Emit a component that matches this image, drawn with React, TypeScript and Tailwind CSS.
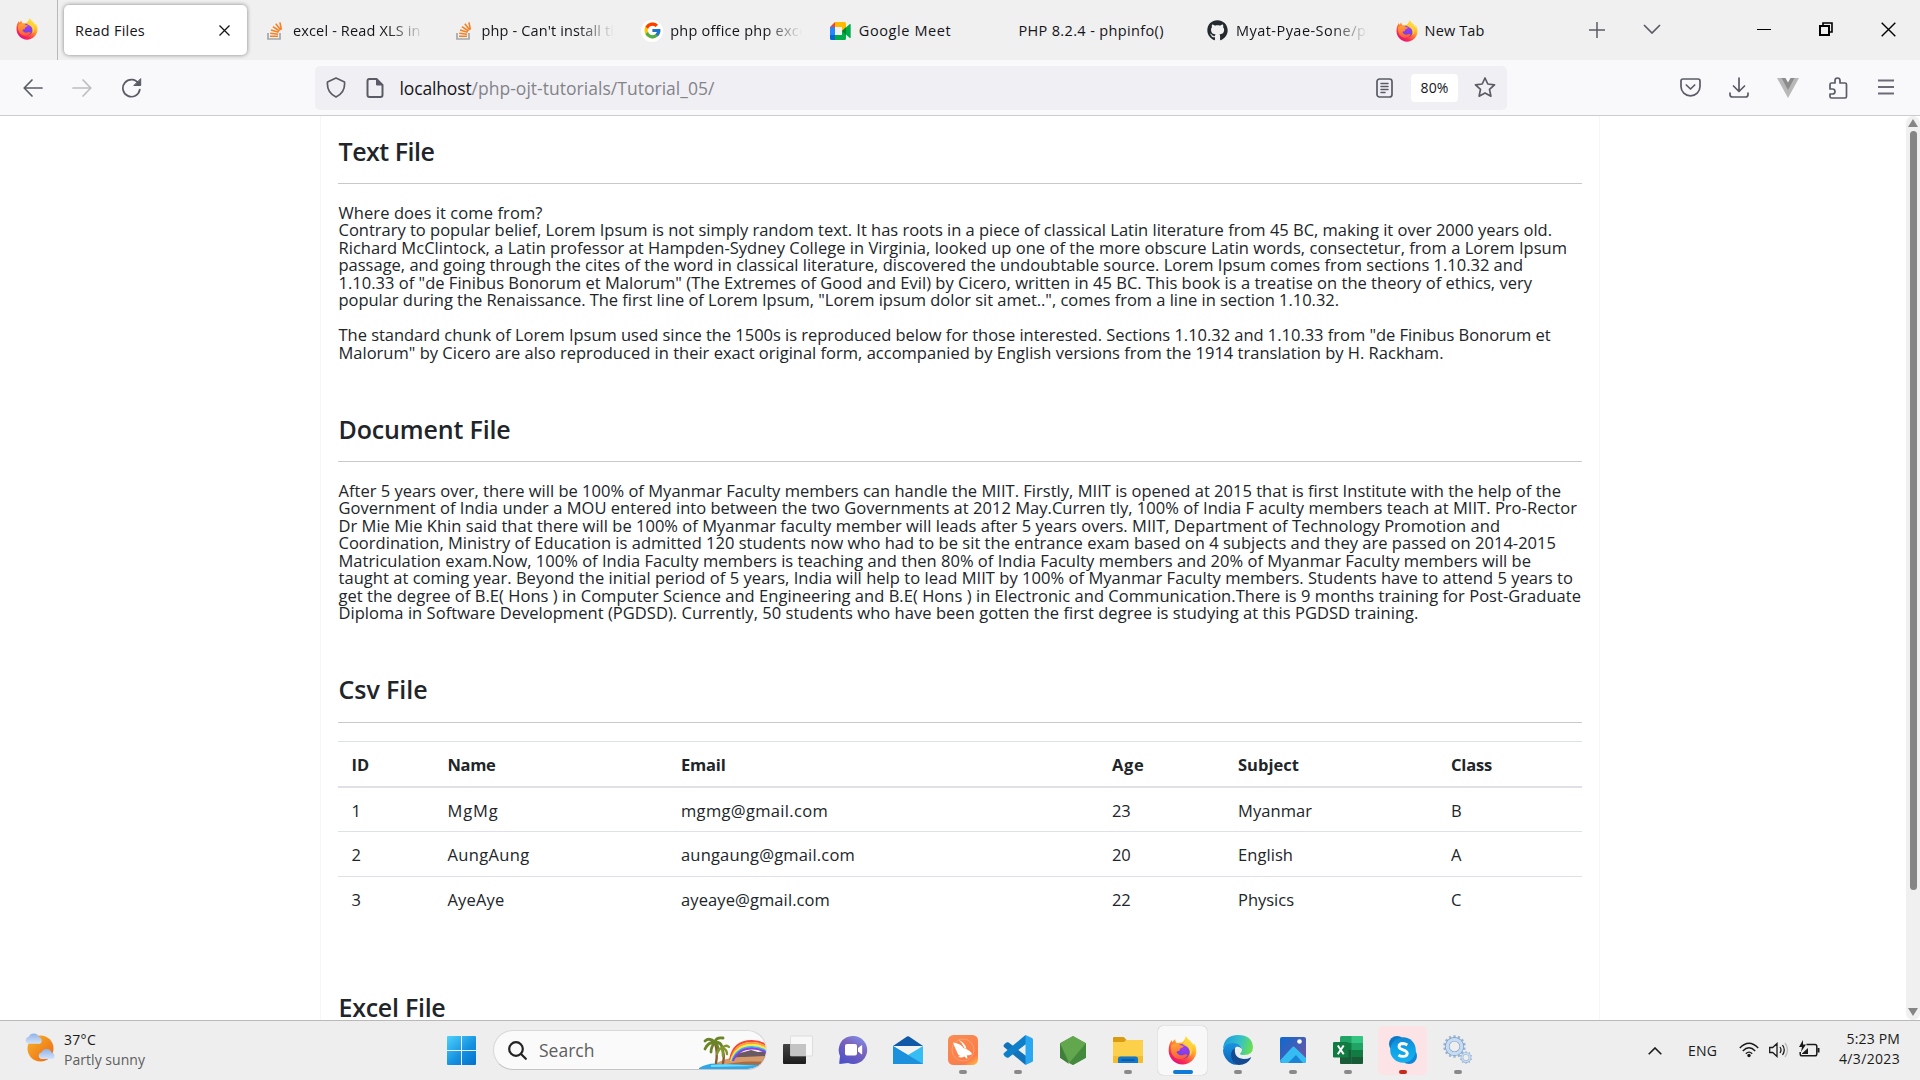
import React, { useLayoutEffect, useRef, useState } from "react";
import { FaGithub } from "react-icons/fa";
import { FcGoogle } from "react-icons/fc";

/* A single line of text whose tracking is adjusted so that it is exactly w pixels wide. */
function Fit({ w, className = "", children }: { w: number; className?: string; children: React.ReactNode }) {
  const ref = useRef<HTMLSpanElement>(null);
  const [spacing, setSpacing] = useState(0);
  useLayoutEffect(() => {
    const el = ref.current;
    if (!el) return;
    el.style.letterSpacing = "0px";
    const natural = el.getBoundingClientRect().width;
    const count = (el.textContent || "").length;
    const next = (w - natural) / count;
    el.style.letterSpacing = `${next}px`;
    setSpacing(next);
  }, [w]);
  return (
    <span ref={ref} className={`inline-block whitespace-pre ${className}`} style={{ letterSpacing: `${spacing}px` }}>
      {children}
    </span>
  );
}

function Firefox({ size, id }: { size: number; id: string }) {
  return (
    <svg width={size} height={size} viewBox="0 0 32 32" className="shrink-0">
      <defs>
        <linearGradient id={`${id}a`} x1="0.85" y1="0.1" x2="0.25" y2="0.95">
          <stop offset="0" stopColor="#fff44f" />
          <stop offset=".3" stopColor="#ffb829" />
          <stop offset=".55" stopColor="#ff7139" />
          <stop offset=".8" stopColor="#fb2a54" />
          <stop offset="1" stopColor="#e2107f" />
        </linearGradient>
        <radialGradient id={`${id}b`} cx=".6" cy=".3" r=".8">
          <stop offset="0" stopColor="#a238f0" />
          <stop offset=".6" stopColor="#7542e5" />
          <stop offset="1" stopColor="#5b35b5" />
        </radialGradient>
        <linearGradient id={`${id}c`} x1="0.2" y1="0" x2="0.5" y2="1">
          <stop offset="0" stopColor="#ffa436" />
          <stop offset="1" stopColor="#ff5a3d" />
        </linearGradient>
      </defs>
      <path
        d="M19.600 0c-.6 3.200-2 5.200-4.200 7.200-2.500.1-4 .2-5.500.8C8.300 6.600 8 5.200 8 3.700 6.600 4.500 5.600 5.700 5.200 7c-.7-.7-1-1.600-1.100-2.500C1.500 8 .5 12.500.8 17.200 1.400 25.300 8 31.500 16 31.500S31 25.200 31.300 17.200c.1-3.600-.8-7-2.700-9.600-.1 1-.3 1.700-.6 2.400C26.300 6 23 4.500 19.600 0z"
        fill={`url(#${id}a)`}
      />
      <circle cx="16" cy="17" r="8.200" fill={`url(#${id}b)`} />
      <path
        d="M3.500 10c3-2.600 8-2.200 10 .3 1.300.1 3 .2 3.800.7-.4 1.700-2 2-3.600 2.800-.8.5-.5 1.600-1 2.500-1.400.3-2.500.2-3.200 1.600 1.500 3.200 5 4.200 8 2.900 2-1 3.500-.6 4 .5-2 3.500-6 5.200-10 4.200C4 23.500 2 16.500 3.500 10z"
        fill={`url(#${id}c)`}
      />
      <path d="M20 1c.5 4 5.500 6 6.800 11.500.8 4-.3 7.500-2.800 10 .8-5-.2-9.500-4.200-11.300-1.500-.8-2.800-1.200-3.800-2.700C18.500 6.800 19.800 4 20 1z" fill="#ffd43c" opacity=".85" />
    </svg>
  );
}

function StackOverflow() {
  return (
    <svg width="16" height="18" viewBox="0 0 16 18" fill="none" className="shrink-0">
      <path d="M1 11v6h12v-6" stroke="#a3a7ab" strokeWidth="1.700" />
      <path d="M3 14.200h8M3.200 11.300l7.900 1M4 8l7.600 2.300M5.900 4.600l6.600 4.400M8.800 1.800l4.900 6.200M12.900.3l1.500 7.400" stroke="#f48024" strokeWidth="1.600" />
    </svg>
  );
}

function Meet() {
  return (
    <svg width="21" height="18" viewBox="0 0 21 18" className="shrink-0">
      <path d="M0 5h5v8H0z" fill="#2684fc" />
      <path d="M5 0v5H0z" fill="#ea4335" />
      <path d="M5 0h9.500Q16 0 16 1.500V9h-4V5H5z" fill="#ffba00" />
      <path d="M0 13h5v5H1.500Q0 18 0 16.500z" fill="#0066da" />
      <path d="M5 13h7V9h4v7.500q0 1.500-1.500 1.500H5z" fill="#00ac47" />
      <path d="M12 9l7.500-6.800q1.200-.7 1.200.6v12.400q0 1.300-1.200.6z" fill="#00ac47" />
      <path d="M12 9l4-3.700v7.400z" fill="#00832d" />
    </svg>
  );
}

function Tab({ icon, title, w, fade }: { icon?: React.ReactNode; title: string; w: number; fade?: boolean }) {
  return (
    <div className="flex w-[188.600px] shrink-0 items-center pl-[10px] pt-px">
      {icon && <span className="mr-[7px] flex w-[22px] justify-center">{icon}</span>}
      <span className={fade ? "block w-[132px] overflow-hidden [mask-image:linear-gradient(90deg,#000_72%,transparent)]" : "block"}>
        <Fit w={w}>{title}</Fit>
      </span>
    </div>
  );
}

function TabStrip() {
  return (
    <div className="flex h-[60px] items-stretch bg-[#f0f0f0] text-[14.500px] text-[#15141a]">
      <div className="flex w-[58px] items-center justify-center border-r border-[#b8b8b8] pb-0.5 pr-[3px]">
        <Firefox size={22} id="ffa" />
      </div>
      <div className="ml-[6px] mr-[9px] mt-[5px] flex h-[50px] w-[183px] items-center justify-between rounded-[5px] bg-white pl-[11px] pr-[17px] shadow-[0_0_4px_rgba(0,0,0,0.45)]">
        <span className="mt-px"><Fit w={70}>Read Files</Fit></span>
        <svg width="11" height="11" viewBox="0 0 11 11" stroke="#15141a" strokeWidth="1.300">
          <path d="M.5.5l10 10M10.500.5l-10 10" />
        </svg>
      </div>
      <div className="-ml-[2px] flex">
        <Tab icon={<StackOverflow />} title="excel - Read XLS in PHP" w={160} fade />
        <Tab icon={<StackOverflow />} title="php - Can't install the" w={146} fade />
        <Tab icon={<span className="flex h-[22px] w-[22px] items-center justify-center rounded-full bg-white"><FcGoogle size={19} /></span>} title="php office php excel" w={141} fade />
        <Tab icon={<Meet />} title="Google Meet" w={92.5} />
        <Tab title="PHP 8.2.4 - phpinfo()" w={145.5} />
        <Tab icon={<FaGithub size={21} color="#24292f" />} title="Myat-Pyae-Sone/php" w={149} fade />
        <Tab icon={<Firefox size={22} id="ffb" />} title="New Tab" w={60} />
      </div>
      <div className="flex flex-1 items-center pl-[15px]">
        <svg width="16" height="16" viewBox="0 0 16 16" stroke="#5b5b66" strokeWidth="1.500">
          <path d="M8 0v16M0 8h16" />
        </svg>
        <svg className="ml-[38px] mt-[-3px]" width="18" height="10" viewBox="0 0 18 10" fill="none" stroke="#5b5b66" strokeWidth="1.700">
          <path d="M1 1l8 8 8-8" />
        </svg>
      </div>
      <div className="mr-[24px] flex items-center gap-[48px] pb-0.5">
        <span className="h-px w-[14px] bg-black" />
        <svg width="14" height="14" viewBox="0 0 14 14" fill="none" stroke="#000" strokeWidth="2">
          <path d="M1 4h9v9H1z" />
          <path d="M4 4V1h9v9h-3" strokeWidth="1.600" />
        </svg>
        <svg width="15" height="15" viewBox="0 0 15 15" stroke="#000" strokeWidth="1.400">
          <path d="M.7.700l13.600 13.600M14.300.7L.7 14.300" />
        </svg>
      </div>
    </div>
  );
}

function Toolbar() {
  const stroke = { fill: "none", stroke: "#5b5b66", strokeWidth: 1.7, strokeLinecap: "round" as const, strokeLinejoin: "round" as const };
  return (
    <div className="flex h-[56px] items-center border-b border-[#cccccf] bg-[#f9f9fb] text-[#15141a]">
      <div className="flex w-[315px] items-center gap-[29px] pl-[23px]">
        <svg width="20" height="18" viewBox="0 0 20 18" {...stroke}><path d="M19 9H1.500M9 1L1.200 9 9 17" /></svg>
        <svg width="20" height="18" viewBox="0 0 20 18" {...stroke} stroke="#bdbdc2"><path d="M1 9h17.500M11 1l7.800 8-7.800 8" /></svg>
        <svg width="21" height="20" viewBox="0 0 21 20" {...stroke}>
          <path d="M17.500 5.500A8.500 8.500 0 1 0 18.800 11.500" />
          <path d="M19.700 1v6.500h-6.500z" fill="#5b5b66" strokeWidth="1" />
        </svg>
      </div>
      <div className="mr-[171px] flex h-[44px] w-[1192px] items-center rounded-[5px] bg-[#f0f0f4] pl-[11px] pr-[11px]">
        <svg width="20" height="21" viewBox="0 0 20 21" {...stroke}><path d="M10 1l8.500 4c.6 6-1.500 11.500-8.500 15C3 16.500.9 11 1.500 5z" /></svg>
        <svg className="ml-[20px]" width="18" height="20" viewBox="0 0 18 20" {...stroke} strokeWidth="2">
          <path d="M3 1h7.500L16.500 7v10q0 2-2 2H3.500q-2 0-2-2V3q0-2 2-2z" />
          <path d="M10.500 1v6h6z" fill="#5b5b66" strokeWidth="1" />
        </svg>
        <div className="ml-[15.500px] flex flex-1 pt-0.5 text-[17.500px]">
          <Fit w={72}>localhost</Fit>
          <Fit w={243} className="text-[#83838a]">/php-ojt-tutorials/Tutorial_05/</Fit>
        </div>
        <svg width="17" height="20" viewBox="0 0 17 20" {...stroke}>
          <rect x="1" y="1" width="15" height="18" rx="2.500" />
          <path d="M5 5.500h7M5 8.500h7M5 11.500h7M5 14.500h4" strokeWidth="1.500" />
        </svg>
        <div className="ml-[18px] mr-[16px] flex h-[28px] w-[47px] items-center justify-center rounded bg-white text-[14px]">
          <Fit w={28}>80%</Fit>
        </div>
        <svg width="22" height="21" viewBox="0 0 22 21" {...stroke}><path d="M11 1l2.800 6 6.700.8-5 4.500 1.400 6.900-5.900-3.300-5.900 3.300 1.400-6.900-5-4.500 6.700-.8z" /></svg>
      </div>
      <div className="flex items-center">
        <svg className="ml-[2px]" width="21" height="19" viewBox="0 0 21 19" {...stroke}>
          <path d="M3 1h15q2 0 2 2v5.500a9.500 9.300 0 0 1-19 0V3q0-2 2-2z" /><path d="M6.300 7l4.200 4 4.200-4" />
        </svg>
        <svg className="ml-[28px]" width="20" height="21" viewBox="0 0 20 21" {...stroke}>
          <path d="M10 1v13M4.500 9l5.500 5.500L15.500 9M1 16v1.500Q1 20 3.500 20h13q2.500 0 2.500-2.500V16" />
        </svg>
        <svg className="ml-[28px]" width="22" height="20" viewBox="0 0 22 20">
          <path d="M0 0h22L11 20z" fill="#b8b8b8" /><path d="M4.500 0H9l2 4 2-4h4.500L11 12z" fill="#8c8c8c" /><path d="M8.500 0h5L11 4.500z" fill="#f9f9fb" />
        </svg>
        <svg className="ml-[29px]" width="20" height="22" viewBox="0 0 20 22" {...stroke}>
          <path d="M2 12V7.500Q2 6 3.500 6H7V3.500a2.500 2.500 0 0 1 5 0V6h5q1.500 0 1.500 1.500v12q0 1.500-1.500 1.500H3.500Q2 21 2 19.500V17h2.500a2.500 2.500 0 0 0 0-5H2z" />
        </svg>
        <svg className="ml-[30px] -mt-[2px]" width="16" height="16" viewBox="0 0 16 16" stroke="#6c6c76" strokeWidth="1.800"><path d="M0 1.500h16M0 8h16M0 14.500h16" /></svg>
      </div>
    </div>
  );
}

type Line = [string, number];

const textFile: Line[] = [
  ["Where does it come from?", 204],
  ["Contrary to popular belief, Lorem Ipsum is not simply random text. It has roots in a piece of classical Latin literature from 45 BC, making it over 2000 years old.", 1213.5],
  ["Richard McClintock, a Latin professor at Hampden-Sydney College in Virginia, looked up one of the more obscure Latin words, consectetur, from a Lorem Ipsum", 1228.5],
  ["passage, and going through the cites of the word in classical literature, discovered the undoubtable source. Lorem Ipsum comes from sections 1.10.32 and", 1184.5],
  ["1.10.33 of \"de Finibus Bonorum et Malorum\" (The Extremes of Good and Evil) by Cicero, written in 45 BC. This book is a treatise on the theory of ethics, very", 1193.5],
  ["popular during the Renaissance. The first line of Lorem Ipsum, \"Lorem ipsum dolor sit amet..\", comes from a line in section 1.10.32.", 1000.5],
  ["", 0],
  ["The standard chunk of Lorem Ipsum used since the 1500s is reproduced below for those interested. Sections 1.10.32 and 1.10.33 from \"de Finibus Bonorum et", 1212],
  ["Malorum\" by Cicero are also reproduced in their exact original form, accompanied by English versions from the 1914 translation by H. Rackham.", 1105],
];

const docFile: Line[] = [
  ["After 5 years over, there will be 100% of Myanmar Faculty members can handle the MIIT. Firstly, MIIT is opened at 2015 that is first Institute with the help of the", 1222.5],
  ["Government of India under a MOU entered into between the two Governments at 2012 May.Curren tly, 100% of India F aculty members teach at MIIT. Pro-Rector", 1238.5],
  ["Dr Mie Mie Khin said that there will be 100% of Myanmar faculty member will leads after 5 years overs. MIIT, Department of Technology Promotion and", 1161.5],
  ["Coordination, Ministry of Education is admitted 120 students now who had to be sit the entrance exam based on 4 subjects and they are passed on 2014-2015", 1217.5],
  ["Matriculation exam.Now, 100% of India Faculty members is teaching and then 80% of India Faculty members and 20% of Myanmar Faculty members will be", 1192.5],
  ["taught at coming year. Beyond the initial period of 5 years, India will help to lead MIIT by 100% of Myanmar Faculty members. Students have to attend 5 years to", 1234.5],
  ["get the degree of B.E( Hons ) in Computer Science and Engineering and B.E( Hons ) in Electronic and Communication.There is 9 months training for Post-Graduate", 1242.5],
  ["Diploma in Software Development (PGDSD). Currently, 50 students who have been gotten the first degree is studying at this PGDSD training.", 1080],
];

const rows: [string, string, number, string, number, string, string, number, string][] = [
  ["1", "MgMg", 51, "mgmg@gmail.com", 147, "23", "Myanmar", 74, "B"],
  ["2", "AungAung", 82, "aungaung@gmail.com", 174, "20", "English", 55, "A"],
  ["3", "AyeAye", 57, "ayeaye@gmail.com", 149, "22", "Physics", 56, "C"],
];

function Heading({ children, w }: { children: string; w: number }) {
  return (
    <h2 className="flex h-[32px] items-center pl-[0.500px] text-[25px] font-semibold leading-[32px] text-[#212529]">
      <Fit w={w}>{children}</Fit>
    </h2>
  );
}

function Lines({ lines }: { lines: Line[] }) {
  return (
    <div className="mt-[19.500px] pl-[0.500px]">
      {lines.map(([t, w], i) => (
        <div key={i} className="h-[17.500px] leading-[17.500px]">
          {t && <Fit w={w}>{t}</Fit>}
        </div>
      ))}
    </div>
  );
}

const grid = "grid grid-cols-[96px_233.500px_431px_126px_213px_1fr] items-center justify-items-start pl-[13.500px]";

function Page() {
  return (
    <div className="flex h-[904px] overflow-hidden bg-white">
      <div className="ml-[320px] w-[1280px] border-x border-[#f6f6f6] px-[17px] pt-[19px] text-[16.500px] text-[#212529]">
        <Heading w={96}>Text File</Heading>
        <div className="mt-[16px] h-px bg-[#c8c9ca]" />
        <Lines lines={textFile} />
        <div className="mt-[52px]"><Heading w={172}>Document File</Heading></div>
        <div className="mt-[16px] h-px bg-[#c8c9ca]" />
        <Lines lines={docFile} />
        <div className="mt-[51.500px]"><Heading w={89}>Csv File</Heading></div>
        <div className="mt-[17px] h-px bg-[#c8c9ca]" />
        <div className="mt-[18px]">
          <div className={`${grid} h-[47px] border-b-2 border-t border-b-[#dee2e6] border-t-[#dee2e6] pt-0.5 font-bold`}>
            <Fit w={18}>ID</Fit>
            <Fit w={48}>Name</Fit>
            <Fit w={44.5}>Email</Fit>
            <Fit w={32.5}>Age</Fit>
            <Fit w={61}>Subject</Fit>
            <Fit w={41}>Class</Fit>
          </div>
          {rows.map((r, i) => (
            <div key={i} className={`${grid} ${i === 0 ? "h-[43px] pt-[3px]" : "h-[45px] border-t border-[#dee2e6] pt-0.5"}`}>
              <span>{r[0]}</span>
              <Fit w={r[2]}>{r[1]}</Fit>
              <Fit w={r[4]}>{r[3]}</Fit>
              <Fit w={18.5}>{r[5]}</Fit>
              <Fit w={r[7]}>{r[6]}</Fit>
              <span>{r[8]}</span>
            </div>
          ))}
        </div>
        <div className="mt-[70px]"><Heading w={107}>Excel File</Heading></div>
      </div>
      <div className="ml-auto flex w-[14px] flex-col items-center rounded-full bg-[#f0f0f0]">
        <svg className="mt-[3px] shrink-0" width="10" height="8" viewBox="0 0 10 8"><path d="M5 0l5 8H0z" fill="#858585" /></svg>
        <div className="mt-[4px] h-[759px] w-[7px] shrink-0 rounded-full bg-[#858585]" />
        <svg className="mb-[4px] mt-auto shrink-0" width="10" height="8" viewBox="0 0 10 8"><path d="M0 0h10L5 8z" fill="#858585" /></svg>
      </div>
    </div>
  );
}

function Slot({ children, dot, tile }: { children: React.ReactNode; dot?: string; tile?: string }) {
  return (
    <div className={`mx-[3px] mt-[5px] flex h-[49px] w-[49px] shrink-0 flex-col items-center rounded-[5px] pt-[9px] ${tile || ""}`}>
      <div className="flex h-[30px] items-center">{children}</div>
      {dot && <span className={`mt-[5px] h-[4px] shrink-0 rounded-full ${dot}`} />}
    </div>
  );
}

const gray = "w-[8px] bg-[#8a8a8a]";

function Gear({ cx, cy, r, n }: { cx: number; cy: number; r: number; n: number }) {
  return (
    <g transform={`translate(${cx} ${cy})`}>
      {Array.from({ length: n }, (_, i) => (
        <rect key={i} x={-r * 0.13} y={-r * 1.25} width={r * 0.26} height={r * 0.5} fill="#9db6d3" transform={`rotate(${(360 / n) * i})`} />
      ))}
      <circle r={r * 0.8} fill="none" stroke="#7d9cc4" strokeWidth={r * 0.5} />
      <circle r={r * 0.8} fill="none" stroke="#c5dcf2" strokeWidth={r * 0.36} />
    </g>
  );
}

function Weather() {
  const cloud = "M3 8.500a3 3 0 0 1 .6-5.800A4.500 4.500 0 0 1 12 3a3 3 0 0 1 1 5.500z";
  return (
    <svg width="31" height="29" viewBox="0 0 31 29">
      <defs>
        <linearGradient id="sun" x1="0" y1="0" x2="1" y2="1"><stop offset="0" stopColor="#f6b52c" /><stop offset="1" stopColor="#ee6410" /></linearGradient>
        <linearGradient id="cloud" x1="0" y1="0" x2="0" y2="1"><stop offset="0" stopColor="#8fb2e8" /><stop offset="1" stopColor="#d3e3fa" /></linearGradient>
      </defs>
      <circle cx="15.500" cy="15.500" r="13" fill="url(#sun)" />
      <path d={cloud} fill="url(#cloud)" transform="translate(-.5 .5) scale(1.200)" />
      <path d={cloud} fill="url(#cloud)" transform="translate(12.500 16) scale(1.180)" />
    </svg>
  );
}

function Beach() {
  return (
    <svg width="67" height="34" viewBox="0 0 67 34">
      <defs><clipPath id="pill"><path d="M0 0h50Q67 0 67 16T50 34H0z" /></clipPath></defs>
      <g clipPath="url(#pill)">
        <path d="M29 27Q38 17 45 17l7-2 7 2 8-1v13H29z" fill="#6c5a62" />
        <path d="M12 31Q28 21 45 22l22-1v10z" fill="#d59a6b" />
        <path d="M20 31q20-6 47-4v4z" fill="#a86c42" />
        <g fill="none" strokeWidth="2">
          <path d="M31 25Q34 6 53 6q9 0 15 5" stroke="#f4473a" />
          <path d="M32 25Q36 8 53 8q9 0 15 5" stroke="#ff9d2f" />
          <path d="M32 26Q37 10 53 10q9 0 15 5" stroke="#f8ea3e" />
          <path d="M33 26Q38 12 53 12q9 0 15 5" stroke="#35b8e8" />
          <path d="M34 26Q39 13.500 53 13.500q9 0 15 5" stroke="#8c3fe0" />
        </g>
        <path d="M0 33Q10 27 22 29l45 1v4H0z" fill="#2ea8ea" />
        <path d="M12 30q15-2 45 1l-45 1z" fill="#6fdcf8" />
      </g>
      <g fill="none" strokeLinecap="round">
        <path d="M17 28Q19 17 16 8M24 28q2-8-1-15" stroke="#8a5a2c" strokeWidth="2.400" />
        <path d="M16 7Q10 2 6 6M16 7Q9 7 6 14M16 7Q17 2 24 3M16 7q6 0 7 5M16 7Q12 12 12 17M16 7q4 5 3 9" stroke="#6c8428" strokeWidth="2.800" />
        <path d="M23 13q4-4 7-1M23 13q5 1 5 6M23 13q-4 1-5 6M23 13q1 5 1 8" stroke="#82982f" strokeWidth="2.400" />
      </g>
    </svg>
  );
}

function Taskbar() {
  return (
    <div className="flex h-[60px] border-t border-[#b9b9b9] bg-[#eeeeee] text-[#1a1a1a]">
      <div className="flex w-[447px] pl-[25px] pt-[12px]">
        <Weather />
        <div className="-mt-[3px] ml-[8px] text-[14px] leading-[20px]">
          <div><Fit w={32}>37°C</Fit></div>
          <div className="text-[#5d5d5d]"><Fit w={81}>Partly sunny</Fit></div>
        </div>
      </div>
      <svg className="mt-[15px] shrink-0" width="29" height="29" viewBox="0 0 29 29">
        <defs><linearGradient id="win" gradientUnits="userSpaceOnUse" x1="0" y1="0" x2="26" y2="29"><stop offset="0" stopColor="#4fd2fb" /><stop offset=".6" stopColor="#1490df" /><stop offset="1" stopColor="#0673cf" /></linearGradient></defs>
        <path d="M1 0h13v14H0V1q0-1 1-1zM15 0h13q1 0 1 1v13H15zM0 15h14v14H1q-1 0-1-1zM15 15h14v13q0 1-1 1H15z" fill="url(#win)" />
      </svg>
      <div className="ml-[17px] mt-[9px] flex h-[40px] w-[274px] shrink-0 items-center overflow-hidden rounded-full border border-[#d8d8d8] border-b-[#c4c4c4] bg-[#fafafa] pl-[14px]">
        <svg width="19" height="19" viewBox="0 0 19 19" fill="none" stroke="#222" strokeWidth="2.200" strokeLinecap="round"><circle cx="8" cy="8" r="6.800" /><path d="M13 13l4.800 4.800" /></svg>
        <span className="ml-[12px] text-[17.500px] text-[#5e5e5e]"><Fit w={55.5}>Search</Fit></span>
        <span className="ml-auto mt-[4px]"><Beach /></span>
      </div>
      <div className="ml-[3px] flex">
        <Slot>
          <svg width="30" height="30" viewBox="0 0 30 30">
            <defs><linearGradient id="tv" x1="0" y1="0" x2="0" y2="1"><stop offset="0" stopColor="#444" /><stop offset="1" stopColor="#1c1c1c" /></linearGradient></defs>
            <rect x="0" y="9" width="23" height="20" rx="1" fill="url(#tv)" /><rect x="7.500" y="1" width="22" height="20" rx="1" fill="#f8f8f8" stroke="#cfcfcf" strokeWidth=".6" /><rect x="7.500" y="9" width="15.500" height="12" fill="#c4c4c4" />
          </svg>
        </Slot>
        <Slot>
          <svg width="30" height="30" viewBox="0 0 30 30">
            <defs><linearGradient id="chat" x1=".9" y1="0" x2=".3" y2="1"><stop offset="0" stopColor="#7f94f0" /><stop offset="0.450" stopColor="#7a62ba" /><stop offset="1" stopColor="#4f52c9" /></linearGradient></defs>
            <path d="M15 1a14 14 0 1 1-5 27L2 29q-1 0-.8-1L2 21A14 14 0 0 1 15 1z" fill="url(#chat)" /><rect x="7" y="9" width="12" height="11.500" rx="2" fill="#fff" /><path d="M20 13l3.500-2.700q.7-.3.700.5v8q0 .8-.7.500L20 16.500z" fill="#fff" />
          </svg>
        </Slot>
        <Slot>
          <svg width="30" height="30" viewBox="0 0 30 30">
            <path d="M0 11L14 1.500q1-.6 2 0L30 11z" fill="#1059a9" /><path d="M3 11h24v10H3z" fill="#f2f2f2" /><path d="M0 11l15 9 15-9v18H0z" fill="#36bdf3" /><path d="M0 11l30 18H0z" fill="#1c8fdd" />
          </svg>
        </Slot>
        <Slot dot={gray}>
          <svg width="30" height="30" viewBox="0 0 30 30">
            <defs><linearGradient id="bunny" x1=".3" y1="0" x2="1" y2="1"><stop offset="0" stopColor="#f98a52" /><stop offset=".75" stopColor="#fb7d49" /><stop offset="1" stopColor="#ffc24a" /></linearGradient></defs>
            <rect width="30" height="30" rx="5.500" fill="url(#bunny)" /><circle cx="15" cy="15" r="11" fill="none" stroke="#fcb184" strokeWidth=".6" />
            <path d="M5 7.500Q13 8.500 15.500 13q3.500 1 6 3 2.800 1.800 2.300 3.300-.8 1-3.500.9l-1.600.2q1.200 1.800.3 3.600l-2.500-2.600q-2.500 1.600-6.500.6 1-.8 2.500-1-3-1-3.500-4Q6.500 12 5 7.500zM10.500 5q6.500 2.500 8 8.700l-2-.8Q14.500 8 10.500 5z" fill="#fff" />
          </svg>
        </Slot>
        <Slot dot={gray}>
          <svg width="30" height="30" viewBox="0 0 30 30">
            <path d="M2 8.500l2-1.200q1-.4 1.700.2L25 22.500 22.500 30 1 12q-1-1.300 0-2.300z" fill="#1273ba" /><path d="M2 21.500l2 1.200q1 .4 1.700-.2L25 7.500 22.500 0 1 18q-1 1.300 0 2.300z" fill="#0f7fc9" /><path d="M22.500 0L29 3q1 .5 1 1.600v20.800q0 1.100-1 1.600l-6.500 3z" fill="#2aa7f2" />
          </svg>
        </Slot>
        <Slot>
          <svg width="26" height="29" viewBox="0 0 26 29"><path d="M13 0l13 7.200v14.600L13 29 0 21.800V7.200z" fill="#54964a" /><path d="M0 7.200L9 28 0 21.800z" fill="#3f7f3a" /><path d="M13 0l13 7.200L10 27.300 0 7.200z" fill="#65aa4d" opacity=".8" /><path d="M26 7.200v14.600L13 29l-4-2z" fill="#3d8537" opacity=".7" /></svg>
        </Slot>
        <Slot dot={gray}>
          <svg width="30" height="28" viewBox="0 0 30 28"><path d="M0 2q0-1 1-1h9q1 0 2 1.200L13.500 4H30v6H0z" fill="#d99b12" /><path d="M0 6h11l2-2h16q1 0 1 1v21.500q0 .5-.5.5H.5Q0 27 0 26.500z" fill="#fcd04b" /><path d="M0 20h30v6.500q0 .5-.5.5H.5Q0 27 0 26.500z" fill="#f5bd2c" /><path d="M5 27v-4q0-2.500 2.500-2.500h15Q25 20.500 25 23v4z" fill="#1177cf" /><path d="M8.500 24h13" stroke="#0b4f93" strokeWidth="1.300" /></svg>
        </Slot>
        <Slot dot="w-[20px] bg-[#0f7bd6]" tile="bg-[#f8f8f8] shadow-[0_0_1px_rgba(0,0,0,0.35)]"><Firefox size={29} id="ffc" /></Slot>
        <Slot dot={gray}>
          <svg width="30" height="30" viewBox="0 0 30 30">
            <defs>
              <linearGradient id="ed1" x1="0" y1=".3" x2="1" y2=".5"><stop offset="0" stopColor="#1e9be0" /><stop offset=".55" stopColor="#35c1c8" /><stop offset="1" stopColor="#6be04c" /></linearGradient>
              <linearGradient id="ed2" x1="0" y1="0" x2="0" y2="1"><stop offset="0" stopColor="#1894e0" /><stop offset="1" stopColor="#0c63b8" /></linearGradient>
            </defs>
            <path d="M0 14Q1 0 15 0t15 12q0 8-9 8-4 0-4-1.500 2-1.500 2-4Q18 9 11.500 9 3 9 0 14z" fill="url(#ed1)" /><path d="M0 15q2-7 10-7 7 0 9 6-2-2.500-5-2.500-4 2-3.500 7.500.5 7 7.500 10-9 2.500-14-4-4-4.500-4-10z" fill="url(#ed2)" /><path d="M12 13q-1.500 10 8.500 11 4 .2 7-1.600 1-.4.500.6Q24 30 16 30 8 28 8 19.500 8.500 15 12 13z" fill="#134a92" />
          </svg>
        </Slot>
        <Slot dot={gray}>
          <svg width="26" height="26" viewBox="0 0 26 26">
            <defs><linearGradient id="ph" x1="0" y1="0" x2="1" y2=".8"><stop offset="0" stopColor="#0a6ad0" /><stop offset="1" stopColor="#6f54a4" /></linearGradient></defs>
            <rect width="26" height="26" rx="2" fill="url(#ph)" /><path d="M1 25q-1 0-1-1.500L12.500 10q1-1 2 0L26 21v3q0 2-2 2H2z" fill="#35bdf3" /><path d="M8 26l8-8 7 8z" fill="#1a83d6" /><circle cx="19.500" cy="4.500" r="2.300" fill="#fff" />
          </svg>
        </Slot>
        <Slot dot={gray}>
          <svg width="30" height="28" viewBox="0 0 30 28"><rect x="7" width="23" height="28" rx="1.500" fill="#21a366" /><path d="M18.500 0H28.500Q30 0 30 1.500V7H18.500z" fill="#33c481" /><path d="M7 14h11.500v14H8.500Q7 28 7 26.500z" fill="#1a5c38" /><path d="M7 7h11.500v7H7z" fill="#107c41" /><path d="M18.500 14H30v7H18.500z" fill="#107c41" /><path d="M18.500 21H30v5.500q0 1.500-1.500 1.500h-10z" fill="#185c37" /><rect y="6" width="15.500" height="15.500" rx="1.200" fill="#107c41" /><path d="M4.800 9.500l5.900 8.800M10.700 9.500l-5.900 8.800" stroke="#fff" strokeWidth="2" /></svg>
        </Slot>
        <Slot dot="w-[8px] bg-[#c42b1c]" tile="bg-[#fce4e6]">
          <svg width="28" height="28" viewBox="0 0 28 28">
            <defs><linearGradient id="sk" x1="0" y1="0" x2="0" y2="1"><stop offset="0" stopColor="#1386d3" /><stop offset=".5" stopColor="#0ea5e8" /><stop offset="1" stopColor="#18b0ef" /></linearGradient></defs>
            <circle cx="8" cy="8" r="8" fill="#0b78c6" /><circle cx="20" cy="20" r="8" fill="#1087d4" /><circle cx="14" cy="14" r="12.800" fill="url(#sk)" />
            <path d="M18.300 9Q16 7.500 13.700 7.500 10 7.600 10 10.500q0 2 4 3.300t4.300 3.400q0 3.200-4.500 3.200-2.500 0-4.300-1.300" fill="none" stroke="#fff" strokeWidth="2.800" />
          </svg>
        </Slot>
        <Slot dot={gray}>
          <svg width="30" height="30" viewBox="0 0 30 30"><Gear cx={11.5} cy={11.5} r={9} n={14} /><Gear cx={23} cy={22.5} r={5} n={10} /></svg>
        </Slot>
      </div>
      <div className="ml-auto flex items-center pr-[20px] text-[14px]">
        <svg width="14" height="8" viewBox="0 0 14 8" fill="none" stroke="#1a1a1a" strokeWidth="1.600"><path d="M.7 7.300L7 1l6.300 6.300" /></svg>
        <span className="ml-[26.500px]"><Fit w={29}>ENG</Fit></span>
        <svg className="-mt-px ml-[22px]" width="20" height="16" viewBox="0 0 20 16" fill="none" stroke="#1a1a1a" strokeWidth="1.400"><path d="M.8 6Q10-3.500 19.200 6M3.800 9Q10 2.500 16.200 9M6.800 11.800Q10 8.500 13.200 11.800" /><circle cx="10" cy="13.500" r="1.700" fill="#1a1a1a" stroke="none" /></svg>
        <svg className="-mt-px ml-[10px]" width="20" height="16" viewBox="0 0 20 16" fill="none" stroke="#1a1a1a" strokeWidth="1.300"><path d="M.7 5.500h3L8 1.500v13l-4.300-4h-3zM11 5q2 3 0 6M13.500 3q3.500 5 0 10" /><path d="M16 1q5 7 0 14" stroke="#bdbdbd" /></svg>
        <svg className="-mt-[4px] ml-[10px]" width="21" height="17" viewBox="0 0 21 17" fill="none" stroke="#1a1a1a" strokeWidth="1.500"><path d="M7.500 4.500H16q1.800 0 1.800 1.800V14q0 1.800-1.800 1.800H3Q1.200 15.800 1.200 14v-2" /><path d="M18.500 8h2v4.500h-2z" fill="#1a1a1a" stroke="none" /><path d="M3 13.500L9 8v6H3zM4 0L0 7h3L2 12l5-7.500H4z" fill="#1a1a1a" stroke="none" /></svg>
        <div className="-mt-[3px] ml-[19px] w-[61px] text-right text-[14px] leading-[20px]">
          <div><Fit w={53.5}>5:23 PM</Fit></div>
          <div><Fit w={61}>4/3/2023</Fit></div>
        </div>
      </div>
    </div>
  );
}

export default function App() {
  return (
    <div className="h-[1080px] w-[1920px] overflow-hidden bg-white font-['Open_Sans','Noto_Sans',sans-serif]">
      <TabStrip />
      <Toolbar />
      <Page />
      <Taskbar />
    </div>
  );
}
